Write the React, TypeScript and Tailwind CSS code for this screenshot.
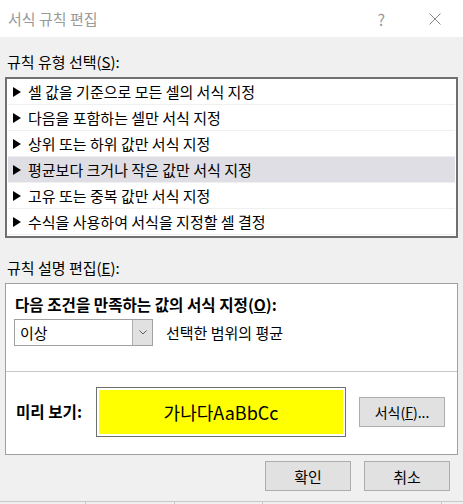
import { useState } from 'react';

const RULE_TYPES = [
  '셀 값을 기준으로 모든 셀의 서식 지정',
  '다음을 포함하는 셀만 서식 지정',
  '상위 또는 하위 값만 서식 지정',
  '평균보다 크거나 작은 값만 서식 지정',
  '고유 또는 중복 값만 서식 지정',
  '수식을 사용하여 서식을 지정할 셀 결정',
];

const FONT = { fontFamily: '"Noto Sans CJK KR", "Noto Sans", sans-serif' };

function Arrow() {
  return (
    <svg width="8" height="10" viewBox="0 0 8 10" className="shrink-0">
      <polygon points="0,0 8,5 0,10" fill="#000" />
    </svg>
  );
}

export default function App() {
  const [selected, setSelected] = useState(3);

  return (
    <div className="w-[463px] h-[504px] bg-[#f0f0f0] flex flex-col text-[15px] text-black overflow-hidden" style={FONT}>
      {/* title bar */}
      <div className="h-[37px] bg-white flex items-center pl-[8px] shrink-0">
        <span className="text-[#999999] text-[15px] leading-none">서식 규칙 편집</span>
        <span className="ml-auto mr-[44px] text-[#999999] text-[16px] leading-none">?</span>
        <svg width="12" height="12" viewBox="0 0 12 12" className="mr-[22px]">
          <path d="M0.5 0.5 L11.5 11.5 M11.5 0.5 L0.5 11.5" stroke="#8a8a8a" strokeWidth="1" />
        </svg>
      </div>

      <div className="pl-[7px] mt-[15px] leading-[20px]">
        규칙 유형 선택(<span className="underline">S</span>):
      </div>

      {/* rule type list */}
      <div className="mx-[5px] mt-[5px] h-[161px] border-2 border-[#707070] bg-white pl-[1px] pr-[1px]">
        {RULE_TYPES.map((t, i) => (
          <div
            key={t}
            onClick={() => setSelected(i)}
            className={
              'h-[26px] flex items-center gap-[7px] pl-[5px] border-b border-[#f0f0f0] ' +
              (i === selected ? 'bg-[#dedee4]' : '')
            }
          >
            <Arrow />
            <span className="leading-none">{t}</span>
          </div>
        ))}
      </div>

      <div className="pl-[7px] mt-[20px] leading-[20px]">
        규칙 설명 편집(<span className="underline">E</span>):
      </div>

      {/* description panel */}
      <div className="mx-[5px] mt-[5px] h-[172px] border border-[#a0a0a0] bg-white flex flex-col">
        <div className="pl-[9px] pt-[10px] font-bold text-[15.6px] leading-[20px]">
          다음 조건을 만족하는 값의 서식 지정(<span className="underline">O</span>):
        </div>
        <div className="flex items-center mt-[5px] pl-[8px]">
          <div className="w-[139px] h-[27px] border border-[#a0a0a0] flex items-center">
            <span className="pl-[5px] flex-1 leading-none">이상</span>
            <div className="w-[20px] h-[25px] bg-[#e1e1e1] border-l border-[#adadad] flex items-center justify-center">
              <svg width="8" height="5" viewBox="0 0 8 5">
                <path d="M0.5 0.5 L4 4 L7.5 0.5" stroke="#606060" fill="none" strokeWidth="1" />
              </svg>
            </div>
          </div>
          <span className="ml-[13px] leading-none">선택한 범위의 평균</span>
        </div>
        <div className="mt-[25px] h-px bg-[#c8c8c8]" />
        <div className="flex items-center flex-1 pl-[10px] pr-[12px] pb-[5px] pt-[3px]">
          <span className="font-bold text-[15.6px] w-[80px] leading-none">미리 보기:</span>
          <div className="w-[250px] h-[50px] border border-[#707070] p-[2px]">
            <div className="w-full h-full bg-[#ffff00] flex items-center justify-center text-[18px] leading-none">
              가나다AaBbCc
            </div>
          </div>
          <button className="ml-auto w-[86px] h-[30px] bg-[#e1e1e1] border border-[#adadad] text-[14px] leading-none">
            서식(<span className="underline">F</span>)...
          </button>
        </div>
      </div>

      {/* dialog buttons */}
      <div className="flex justify-end gap-[13px] pr-[13px] mt-[6px]">
        <button className="w-[86px] h-[30px] bg-[#e1e1e1] border border-[#adadad] leading-none">확인</button>
        <button className="w-[86px] h-[30px] bg-[#e1e1e1] border border-[#adadad] leading-none">취소</button>
      </div>

      <div className="mt-auto h-[3px] border-t border-[#c8c8c8] bg-[#f0f0f0] flex">
        <div className="w-[86px] border-r border-[#c8c8c8]" />
        <div className="w-[89px] border-r border-[#c8c8c8]" />
        <div className="w-[88px] border-r border-[#c8c8c8]" />
        <div className="w-[179px] border-r border-[#c8c8c8]" />
      </div>
    </div>
  );
}
